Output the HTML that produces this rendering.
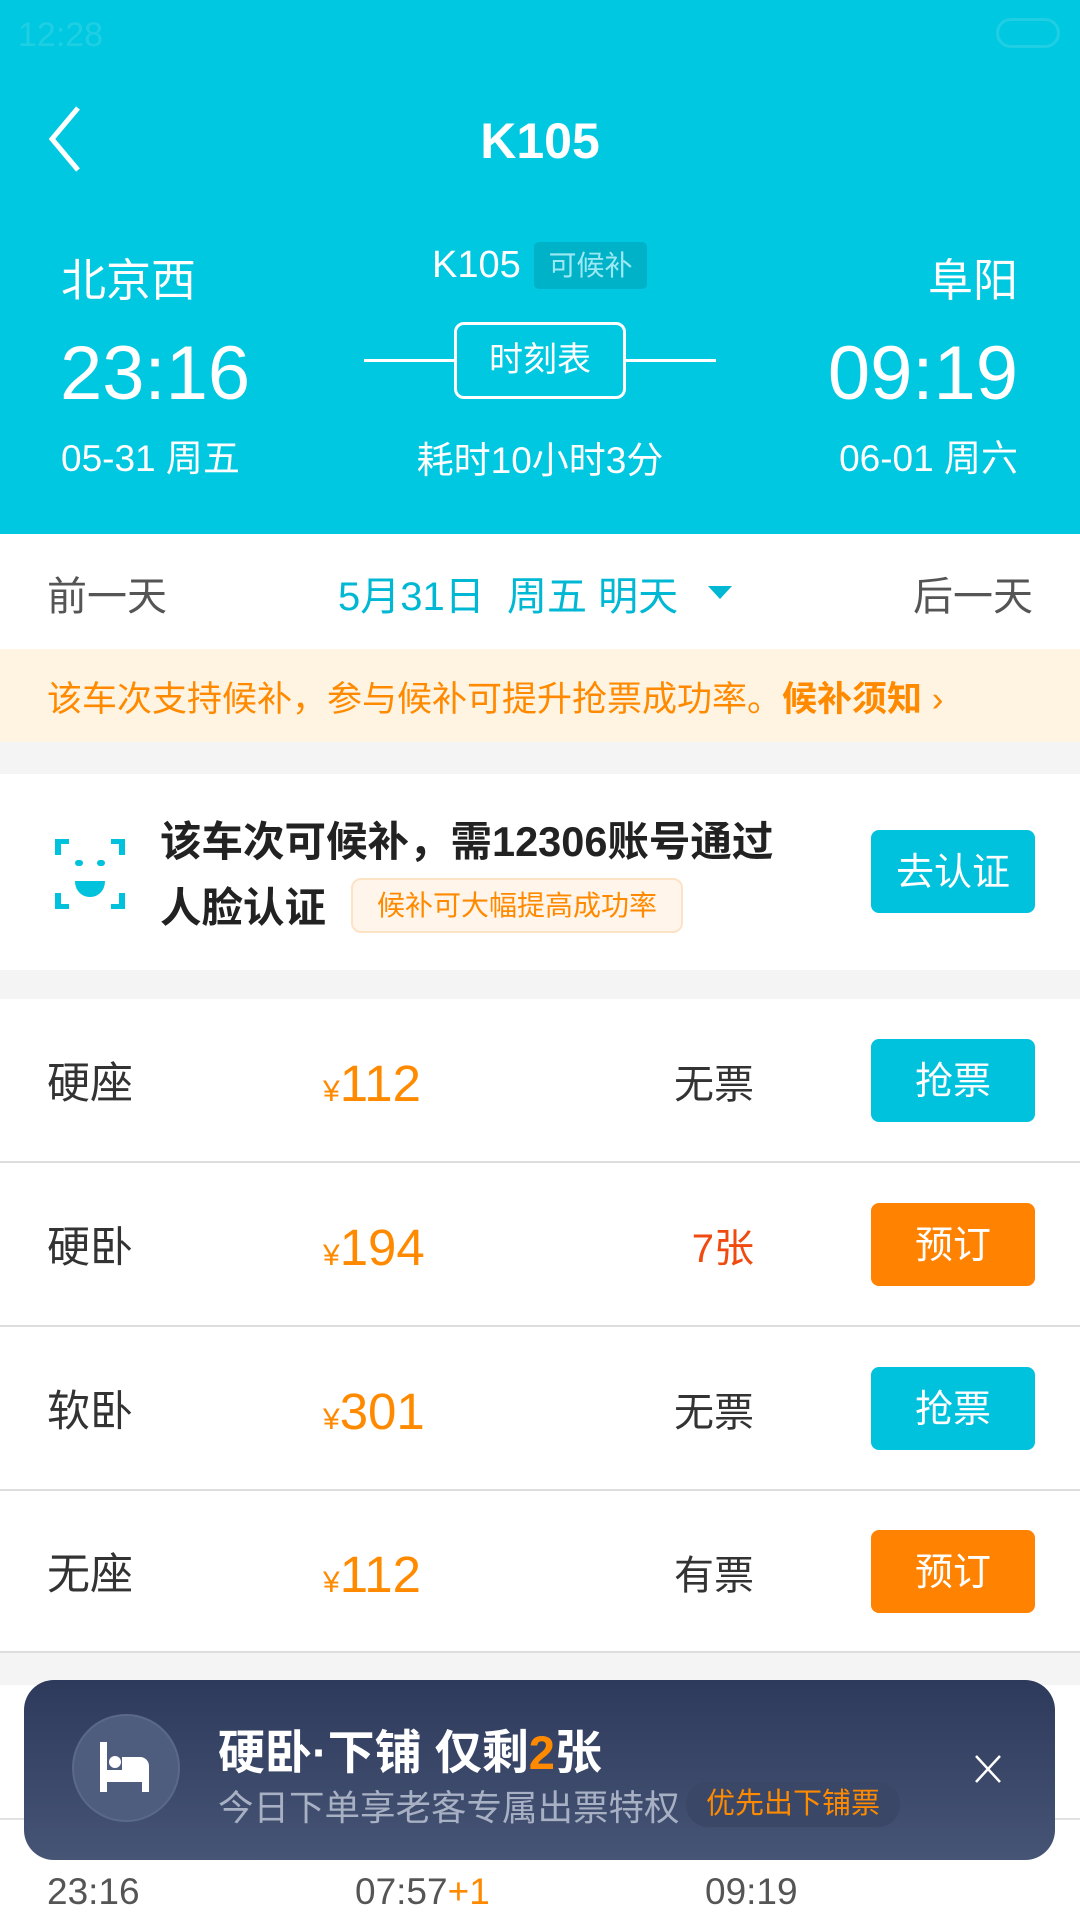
<!DOCTYPE html>
<html><head><meta charset="utf-8"><style>
*{margin:0;padding:0;box-sizing:border-box}
body{width:1080px;height:1920px;overflow:hidden;background:#f4f4f4;font-family:"Liberation Sans","Noto Sans CJK SC",sans-serif;position:relative}
.a{position:absolute;white-space:nowrap}
.hdr{position:absolute;left:0;top:0;width:1080px;height:534px;background:#00C8E0;color:#fff}
.w{background:#fff;position:absolute;left:0;width:1080px}
.btn{position:absolute;left:871px;width:164px;height:83px;border-radius:8px;color:#fff;font-size:38px;text-align:center;line-height:87px}
.c{background:#00C2DC}.o{background:#FF8200}
.row .n{left:47px;font-size:43px;color:#333}
.pr{left:323px;color:#FF8A00;font-size:51px}
.pr small{font-size:30px}
.st{right:326px;font-size:40px;color:#333}
</style></head><body>
<div class="hdr">
<div class="a" style="left:18px;top:16px;font-size:34px;color:rgba(255,255,255,.12)">12:28</div>
<div class="a" style="right:20px;top:18px;width:64px;height:30px;border:3px solid rgba(255,255,255,.12);border-radius:15px"></div>
<svg class="a" style="left:44px;top:104px" width="40" height="70"><path d="M34 4 L8 35 L34 66" stroke="#fff" stroke-width="5" fill="none"/></svg>
<div class="a" style="left:0;width:1080px;text-align:center;top:112px;font-size:50px;font-weight:bold">K105</div>
<div class="a" style="left:61px;top:244px;font-size:45px">北京西</div>
<div class="a" style="left:60px;top:330px;font-size:76px">23:16</div>
<div class="a" style="left:61px;top:428px;font-size:37px">05-31 周五</div>
<div class="a" style="right:62px;top:244px;font-size:45px">阜阳</div>
<div class="a" style="right:62px;top:330px;font-size:76px">09:19</div>
<div class="a" style="right:62px;top:428px;font-size:37px">06-01 周六</div>
<div class="a" style="left:432px;top:244px;font-size:38px">K105</div>
<div class="a" style="left:534px;top:242px;width:113px;height:47px;background:#00B2C8;border-radius:5px;font-size:28px;line-height:47px;text-align:center;color:#9CE9F3">可候补</div>
<div class="a" style="left:364px;top:359px;width:352px;height:3px;background:#fff"></div>
<div class="a" style="left:454px;top:322px;width:172px;height:77px;border:3px solid #fff;border-radius:10px;background:#00C8E0;font-size:34px;line-height:71px;text-align:center">时刻表</div>
<div class="a" style="left:0;width:1080px;text-align:center;top:430px;font-size:37px">耗时10小时3分</div>
</div>
<div class="w" style="top:534px;height:115px">
<div class="a" style="left:47px;top:30px;font-size:40px;color:#555">前一天</div>
<div class="a" style="left:338px;top:30px;font-size:40px;color:#00B8D4">5月31日&nbsp; 周五 明天</div>
<div class="a" style="left:708px;top:52px;width:0;height:0;border-left:12px solid transparent;border-right:12px solid transparent;border-top:13px solid #00B8D4"></div>
<div class="a" style="right:47px;top:30px;font-size:40px;color:#555">后一天</div>
</div>
<div class="w" style="top:649px;height:93px;background:#FFF3E2">
<div class="a" style="left:47px;top:22px;font-size:35px;color:#FF8A00">该车次支持候补，参与候补可提升抢票成功率。<b>候补须知</b> ›</div>
</div>
<div class="w" style="top:774px;height:196px">
<svg class="a" style="left:55px;top:65px" width="70" height="70"><g fill="#00C2DC"><path d="M0 0h14v5H6v11H0z M70 0H56v5h8v11h6z M0 70h14v-5H6V54H0z M70 70H56v-5h8V54h6z"/><rect x="20" y="21" width="8" height="6" rx="3"/><rect x="42" y="21" width="8" height="6" rx="3"/><path d="M20 42h30c0 10-7 16-15 16s-15-6-15-16z"/></g></svg>
<div class="a" style="left:160px;top:34px;font-size:41.5px;font-weight:bold;color:#222">该车次可候补，需12306账号通过</div>
<div class="a" style="left:160px;top:100px;font-size:41.5px;font-weight:bold;color:#222">人脸认证</div>
<div class="a" style="left:351px;top:104px;width:332px;height:55px;border:2px solid #FDE3C6;background:#FFF5EA;border-radius:10px;color:#FF8A00;font-size:28px;line-height:51px;text-align:center">候补可大幅提高成功率</div>
<div class="btn c" style="top:56px">去认证</div>
</div>
<div class="w row" style="top:999px;height:654px">
<div style="position:absolute;left:0;top:162px;width:1080px;height:2px;background:#ddd"></div>
<div style="position:absolute;left:0;top:326px;width:1080px;height:2px;background:#ddd"></div>
<div style="position:absolute;left:0;top:490px;width:1080px;height:2px;background:#ddd"></div>
<div style="position:absolute;left:0;top:652px;width:1080px;height:2px;background:#ddd"></div>
<div class="a n" style="top:50px">硬座</div><div class="a pr" style="top:55px"><small>¥</small>112</div><div class="a st" style="top:53px">无票</div><div class="btn c" style="top:40px">抢票</div>
<div class="a n" style="top:214px">硬卧</div><div class="a pr" style="top:219px"><small>¥</small>194</div><div class="a st" style="top:217px;color:#F04A10">7张</div><div class="btn o" style="top:204px">预订</div>
<div class="a n" style="top:378px">软卧</div><div class="a pr" style="top:383px"><small>¥</small>301</div><div class="a st" style="top:381px">无票</div><div class="btn c" style="top:368px">抢票</div>
<div class="a n" style="top:541px">无座</div><div class="a pr" style="top:546px"><small>¥</small>112</div><div class="a st" style="top:544px">有票</div><div class="btn o" style="top:531px">预订</div>
</div>
<div class="w" style="top:1685px;height:235px">
<div style="position:absolute;left:0;top:133px;width:1080px;height:2px;background:#e2e2e2"></div>
<div class="a" style="left:47px;top:186px;font-size:37px;color:#555">23:16</div>
<div class="a" style="left:355px;top:186px;font-size:37px;color:#555">07:57<span style="color:#FF8A00">+1</span></div>
<div class="a" style="left:705px;top:186px;font-size:37px;color:#555">09:19</div>
</div>
<div class="a" style="left:24px;top:1680px;width:1031px;height:180px;border-radius:30px;background:linear-gradient(#2E3A5B,#465475)">
<div class="a" style="left:48px;top:34px;width:108px;height:108px;border-radius:54px;background:#4E5C7E;border:2px solid #5b6989"></div>
<svg class="a" style="left:72px;top:60px" width="60" height="56"><g fill="#fff"><rect x="4" y="2" width="7" height="50"/><rect x="11" y="30" width="42" height="12"/><rect x="46" y="30" width="7" height="22"/><circle cx="19" cy="22" r="6"/><path d="M26 17h18a9 9 0 0 1 9 9v4H26z"/></g></svg>
<div class="a" style="left:194px;top:34px;font-size:47px;font-weight:bold;color:#fff">硬卧·下铺 仅剩<span style="color:#FF8A00">2</span>张</div>
<div class="a" style="left:194px;top:100px;font-size:35.5px;color:#A8B0C4">今日下单享老客专属出票特权</div>
<div class="a" style="left:662px;top:102px;width:214px;height:45px;border-radius:22px;background:#3A4766;color:#FF8A00;font-size:29px;line-height:45px;text-align:center">优先出下铺票</div>
<svg class="a" style="left:950px;top:74px" width="28" height="30"><path d="M2 2L26 28M26 2L2 28" stroke="#fff" stroke-width="2.5"/></svg>
</div>
</body></html>
